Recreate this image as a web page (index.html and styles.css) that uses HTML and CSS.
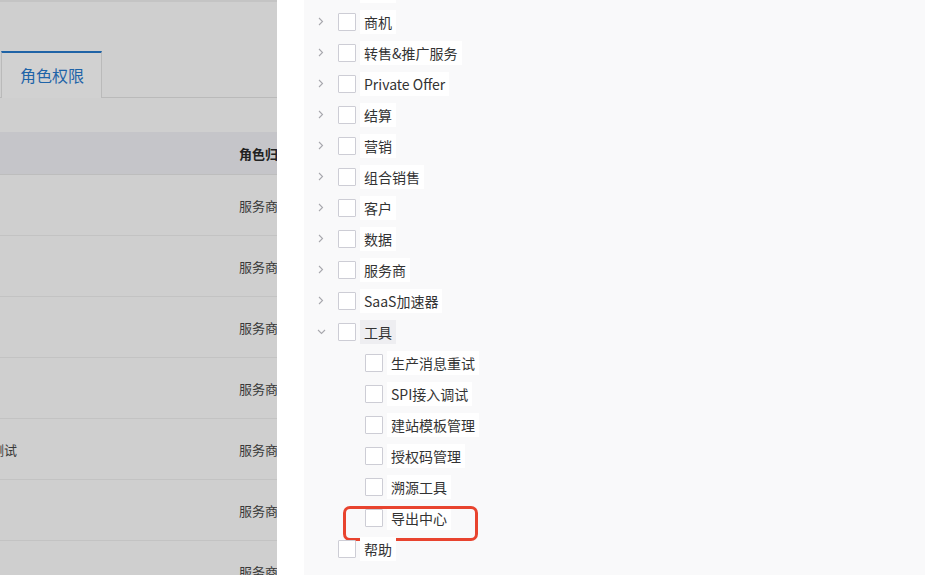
FILE: index.html
```html
<!DOCTYPE html>
<html>
    <head>
        <title>角色权限</title>
        <link rel="stylesheet" href="styles.css">
    </head>
<body>
    <div class="page">
        <div class="topbar"></div>
        <div class="tabs">
            <div class="tab active">角色权限</div>
        </div>

        <div class="table">
            <div class="table-head">
                <div class="cell"></div>
                <div class="cell th">角色归属</div>
            </div>
            <div class="table-row"><div class="cell"></div><div class="cell">服务商</div></div>
            <div class="table-row"><div class="cell"></div><div class="cell">服务商</div></div>
            <div class="table-row"><div class="cell"></div><div class="cell">服务商</div></div>
            <div class="table-row"><div class="cell"></div><div class="cell">服务商</div></div>
            <div class="table-row"><div class="cell"><span class="cut">接口测试</span></div><div class="cell">服务商</div></div>
            <div class="table-row"><div class="cell"></div><div class="cell">服务商</div></div>
            <div class="table-row"><div class="cell"></div><div class="cell">服务商</div></div>
        </div>
    </div>

    <div class="drawer">
        <div class="panel">
            <div class="tree">
                <div class="node">
                    <span class="switcher"><svg width="6" height="9" viewBox="0 0 6 9"><path d="M1 1l3.5 3.5L1 8" fill="none" stroke="#a8a8ae" stroke-width="1.1"/></svg></span>
                    <span class="checkbox"></span><span class="label">商品</span>
                </div>
                <div class="node">
                    <span class="switcher"><svg width="6" height="9" viewBox="0 0 6 9"><path d="M1 1l3.5 3.5L1 8" fill="none" stroke="#a8a8ae" stroke-width="1.1"/></svg></span>
                    <span class="checkbox"></span><span class="label">商机</span>
                </div>
                <div class="node">
                    <span class="switcher"><svg width="6" height="9" viewBox="0 0 6 9"><path d="M1 1l3.5 3.5L1 8" fill="none" stroke="#a8a8ae" stroke-width="1.1"/></svg></span>
                    <span class="checkbox"></span><span class="label">转售&amp;推广服务</span>
                </div>
                <div class="node">
                    <span class="switcher"><svg width="6" height="9" viewBox="0 0 6 9"><path d="M1 1l3.5 3.5L1 8" fill="none" stroke="#a8a8ae" stroke-width="1.1"/></svg></span>
                    <span class="checkbox"></span><span class="label">Private Offer</span>
                </div>
                <div class="node">
                    <span class="switcher"><svg width="6" height="9" viewBox="0 0 6 9"><path d="M1 1l3.5 3.5L1 8" fill="none" stroke="#a8a8ae" stroke-width="1.1"/></svg></span>
                    <span class="checkbox"></span><span class="label">结算</span>
                </div>
                <div class="node">
                    <span class="switcher"><svg width="6" height="9" viewBox="0 0 6 9"><path d="M1 1l3.5 3.5L1 8" fill="none" stroke="#a8a8ae" stroke-width="1.1"/></svg></span>
                    <span class="checkbox"></span><span class="label">营销</span>
                </div>
                <div class="node">
                    <span class="switcher"><svg width="6" height="9" viewBox="0 0 6 9"><path d="M1 1l3.5 3.5L1 8" fill="none" stroke="#a8a8ae" stroke-width="1.1"/></svg></span>
                    <span class="checkbox"></span><span class="label">组合销售</span>
                </div>
                <div class="node">
                    <span class="switcher"><svg width="6" height="9" viewBox="0 0 6 9"><path d="M1 1l3.5 3.5L1 8" fill="none" stroke="#a8a8ae" stroke-width="1.1"/></svg></span>
                    <span class="checkbox"></span><span class="label">客户</span>
                </div>
                <div class="node">
                    <span class="switcher"><svg width="6" height="9" viewBox="0 0 6 9"><path d="M1 1l3.5 3.5L1 8" fill="none" stroke="#a8a8ae" stroke-width="1.1"/></svg></span>
                    <span class="checkbox"></span><span class="label">数据</span>
                </div>
                <div class="node">
                    <span class="switcher"><svg width="6" height="9" viewBox="0 0 6 9"><path d="M1 1l3.5 3.5L1 8" fill="none" stroke="#a8a8ae" stroke-width="1.1"/></svg></span>
                    <span class="checkbox"></span><span class="label">服务商</span>
                </div>
                <div class="node">
                    <span class="switcher"><svg width="6" height="9" viewBox="0 0 6 9"><path d="M1 1l3.5 3.5L1 8" fill="none" stroke="#a8a8ae" stroke-width="1.1"/></svg></span>
                    <span class="checkbox"></span><span class="label">SaaS加速器</span>
                </div>
                <div class="node">
                    <span class="switcher"><svg width="9" height="6" viewBox="0 0 9 6"><path d="M1 1l3.5 3.5L8 1" fill="none" stroke="#a8a8ae" stroke-width="1.1"/></svg></span>
                    <span class="checkbox"></span><span class="label selected">工具</span>
                </div>
                <div class="node child">
                    <span class="switcher"></span>
                    <span class="checkbox"></span><span class="label">生产消息重试</span>
                </div>
                <div class="node child">
                    <span class="switcher"></span>
                    <span class="checkbox"></span><span class="label">SPI接入调试</span>
                </div>
                <div class="node child">
                    <span class="switcher"></span>
                    <span class="checkbox"></span><span class="label">建站模板管理</span>
                </div>
                <div class="node child">
                    <span class="switcher"></span>
                    <span class="checkbox"></span><span class="label">授权码管理</span>
                </div>
                <div class="node child">
                    <span class="switcher"></span>
                    <span class="checkbox"></span><span class="label">溯源工具</span>
                </div>
                <div class="node child marked">
                    <span class="switcher"></span>
                    <span class="checkbox"></span><span class="label">导出中心</span>
                    <div class="highlight"></div>
                </div>
                <div class="node">
                    <span class="switcher"></span>
                    <span class="checkbox"></span><span class="label">帮助</span>
                </div>
            </div>
        </div>
    </div>
</body>
</html>
```

FILE: styles.css
```css
body {
    margin: 0;
    width: 934px;
    height: 575px;
    overflow: hidden;
    display: flex;
    font-family: "Noto Sans CJK SC", "Noto Sans", sans-serif;
}

/* page behind the mask */
.page {
    width: 277px;
    flex-shrink: 0;
    background-color: #cfcfcf;
    overflow: hidden;
}

.topbar {
    height: 2px;
    background-color: #c4c4c4;
}

.tabs {
    margin-top: 49px;
    padding-left: 1px;
    border-bottom: 1px solid #bababa;
    display: flex;
}

.tab {
    height: 45px;
    margin-bottom: -1px;
    border: 1px solid #bababa;
    border-top: 2px solid #1f63a6;
    border-bottom: none;
    background-color: #d1d1d1;
    color: #1f64a8;
    font-size: 16px;
    line-height: 45px;
    padding-left: 18px;
    width: 81px;
}

.table {
    margin-top: 34px;
    width: 420px;
}

.table-head {
    display: grid;
    grid-template-columns: 239px 1fr;
    height: 42px;
    background-color: #c5c5c9;
    border-bottom: 1px solid #bdbdbd;
    align-items: center;
}

.th {
    font-weight: bold;
    color: #222;
}

.table-row {
    display: grid;
    grid-template-columns: 239px 1fr;
    height: 60px;
    border-bottom: 1px solid #c3c3c3;
    align-items: center;
    color: #3a3a3a;
}

.cell {
    font-size: 13px;
    white-space: nowrap;
}

.cut {
    margin-left: -35px;
}

/* drawer */
.drawer {
    flex: 1;
    background-color: #fff;
    padding: 0 9px 0 27px;
    overflow: hidden;
}

.panel {
    height: 100%;
    background-color: #f9f9fa;
    padding-left: 5px;
    overflow: hidden;
}

.tree {
    margin-top: -25px;
}

.node {
    position: relative;
    height: 31px;
    display: flex;
    align-items: center;
    font-size: 14px;
    color: #333;
}

.node.child {
    padding-left: 27px;
}

.switcher {
    width: 24px;
    height: 24px;
    display: flex;
    align-items: center;
    justify-content: center;
}

.checkbox {
    width: 16px;
    height: 16px;
    margin-left: 5px;
    border: 1px solid #cdcdd5;
    border-radius: 1px;
    background-color: #fff;
}

.label {
    margin-left: 4px;
    padding: 0 4px;
    height: 24px;
    line-height: 24px;
    background-color: #fff;
    white-space: nowrap;
}

.label.selected {
    background-color: #eeeef1;
}

.highlight {
    position: absolute;
    left: 34px;
    top: 4px;
    width: 129px;
    height: 29px;
    border: 3px solid #e8432e;
    border-radius: 7px;
}
```
